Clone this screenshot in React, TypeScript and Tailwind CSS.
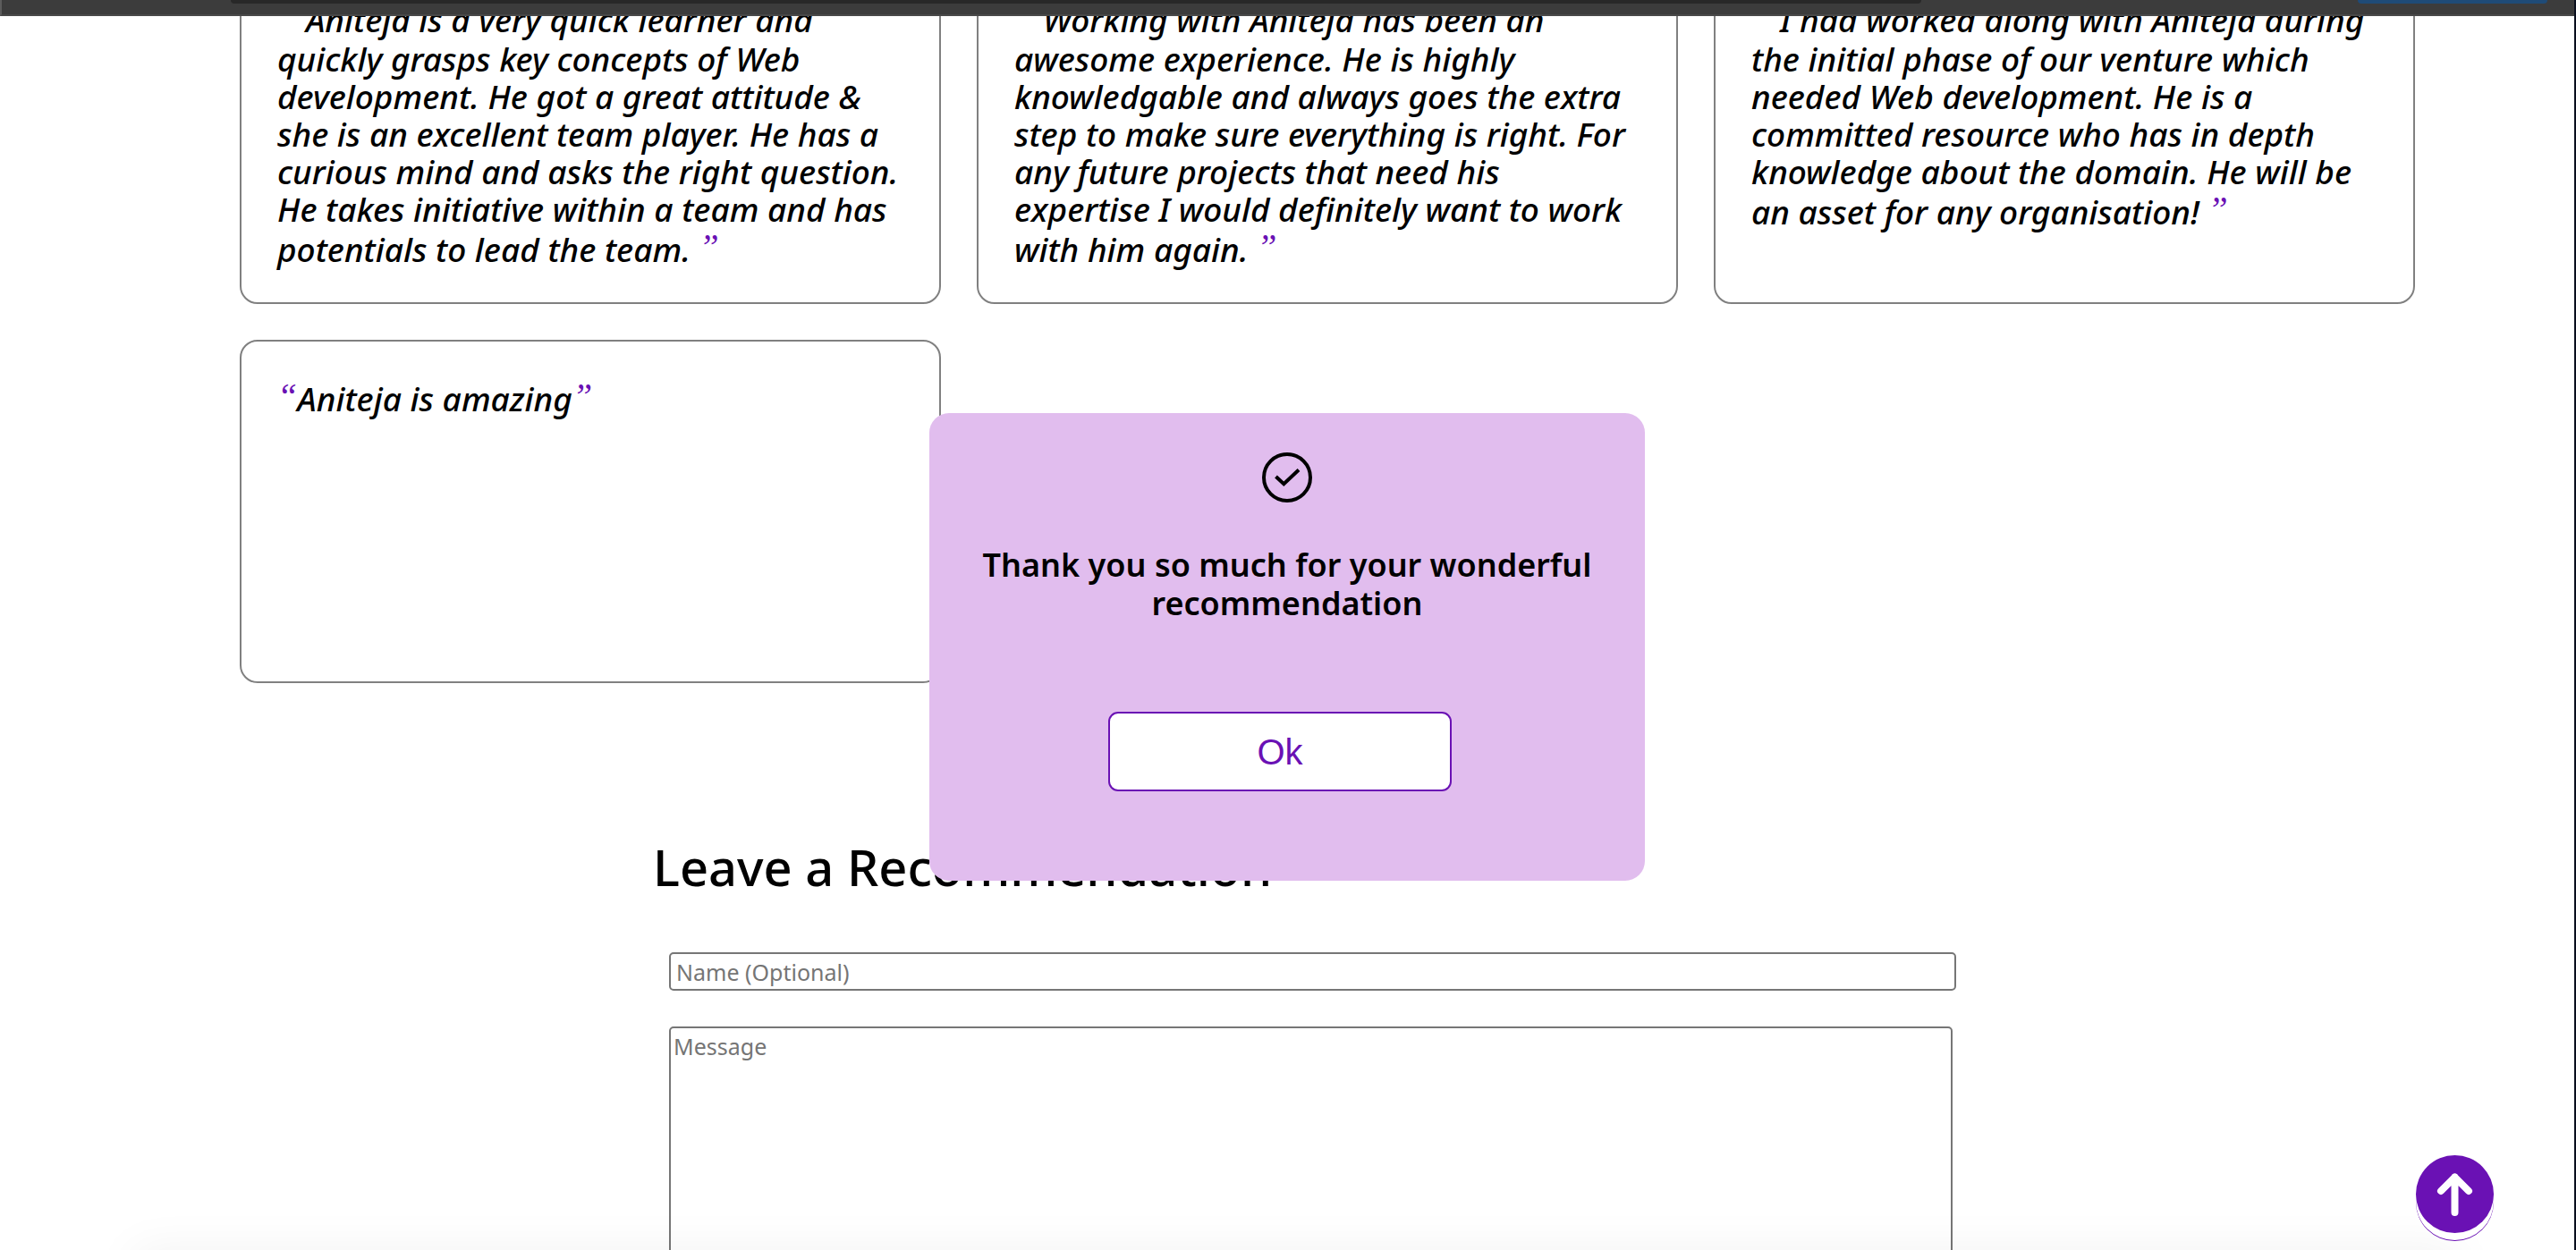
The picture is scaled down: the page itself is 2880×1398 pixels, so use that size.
import React, { useState } from 'react';

const recommendations = [
  'Aniteja is a very quick learner and quickly grasps key concepts of Web development. He got a great attitude & she is an excellent team player. He has a curious mind and asks the right question. He takes initiative within a team and has potentials to lead the team.',
  'Working with Aniteja has been an awesome experience. He is highly knowledgable and always goes the extra step to make sure everything is right. For any future projects that need his expertise I would definitely want to work with him again.',
  'I had worked along with Aniteja during the initial phase of our venture which needed Web development. He is a committed resource who has in depth knowledge about the domain. He will be an asset for any organisation!',
];

function Quote({ children }: { children: string }) {
  return (
    <span className="inline-block pb-1.5 align-[4px] font-['Liberation_Serif',serif] text-[40px] leading-[41px] font-normal text-[#6a11b4]">
      {children}
    </span>
  );
}

function Card({ children }: { children: React.ReactNode }) {
  return (
    <article className="min-h-[384px] rounded-[20px] border-2 border-[#808080] px-10 pt-10 pb-9 text-[37px] leading-[42px] font-medium italic">
      <p>{children}</p>
    </article>
  );
}

function BrowserEdge() {
  return (
    <div className="relative z-10 flex h-[18px] items-start border-b-2 border-l-2 border-b-[#484848] border-l-[#5c5c5c] bg-[#3c3c3c] pr-[30px] pl-[256px]">
      <div className="h-1 w-[1890px] shrink rounded-b-lg bg-[#282828]" />
      <div className="ml-auto h-1 w-[212px] shrink-0 rounded-b-lg bg-[#1f4b77]" />
    </div>
  );
}

function ThankYouDialog({ onClose }: { onClose: () => void }) {
  return (
    <div className="pointer-events-none absolute inset-0 z-20 flex items-center justify-center pt-[49px]">
      <div
        role="dialog"
        aria-labelledby="thanks"
        className="pointer-events-auto flex h-[523px] w-[800px] flex-col items-center rounded-[22px] bg-[#e1bdee] px-10 pt-11"
      >
        <svg viewBox="0 0 56 56" className="size-14" fill="none" stroke="black" strokeWidth="4" aria-hidden="true">
          <circle cx="28" cy="28" r="26" />
          <path d="M15.500 27 24.300 35.200 41 19.500" />
        </svg>
        <h3 id="thanks" className="mt-12 text-center text-[36px] leading-[43px] font-semibold">
          Thank you so much for your wonderful recommendation
        </h3>
        <button
          type="button"
          onClick={onClose}
          className="mt-[100px] mr-4 h-[89px] w-96 rounded-[11px] border-2 border-[#6a11b4] bg-white font-['Liberation_Sans',sans-serif] text-[40px] text-[#6a11b4]"
        >
          Ok
        </button>
      </div>
    </div>
  );
}

export default function App() {
  const [open, setOpen] = useState(true);

  return (
    <div className="relative h-screen overflow-hidden border-r-2 border-[#0a0f1e] bg-white font-['Noto_Sans',sans-serif] text-black">
      <BrowserEdge />

      <main>
        <section className="-mt-[62px] grid grid-cols-3 gap-10 pr-[178px] pl-[268px]">
          {recommendations.map((text) => (
            <Card key={text}>
              <Quote>“</Quote> {text} <Quote>”</Quote>
            </Card>
          ))}
          <Card>
            <Quote>“</Quote>Aniteja is amazing<Quote>”</Quote>
          </Card>
        </section>

        <section className="mt-[165px]">
          <h2 className="ml-[730px] text-[56px] leading-[80px] font-medium">Leave a Recommendation</h2>
          <form className="mt-14 flex flex-col gap-10">
            <input
              type="text"
              aria-label="Name (Optional)"
              placeholder="Name (Optional)"
              className="ml-[748px] h-[43px] w-1/2 rounded-[5px] border-2 border-[#767676] px-1.5 text-[25px] leading-[36px] placeholder:text-[#757575]"
            />
            <textarea
              aria-label="Message"
              placeholder="Message"
              className="ml-[748px] block h-[400px] w-[calc(50%-4px)] resize-none rounded-[5px] border-2 border-[#767676] px-[3px] py-0.5 text-[25px] leading-[36px] placeholder:text-[#757575]"
            />
          </form>
        </section>
      </main>

      <div className="pointer-events-none absolute top-full right-[130px] left-[150px] h-40 shadow-[0_0_50px_rgba(0,0,0,0.055)]" />

      {open && <ThankYouDialog onClose={() => setOpen(false)} />}

      <a
        href="#top"
        aria-label="Back to top"
        className="absolute right-[90px] bottom-[19px] z-10 block size-[87px] rounded-full bg-[#6a11b4] shadow-[0_8px_0_#fff,0_9px_0_#6a11b4]"
      >
        <svg viewBox="0 0 87 87" className="size-full" fill="none" stroke="white" strokeWidth="8" strokeLinecap="round" strokeLinejoin="round" aria-hidden="true">
          <path d="M43.500 64V24.500M28 40 43.500 24.500 59 40" />
        </svg>
      </a>
    </div>
  );
}
